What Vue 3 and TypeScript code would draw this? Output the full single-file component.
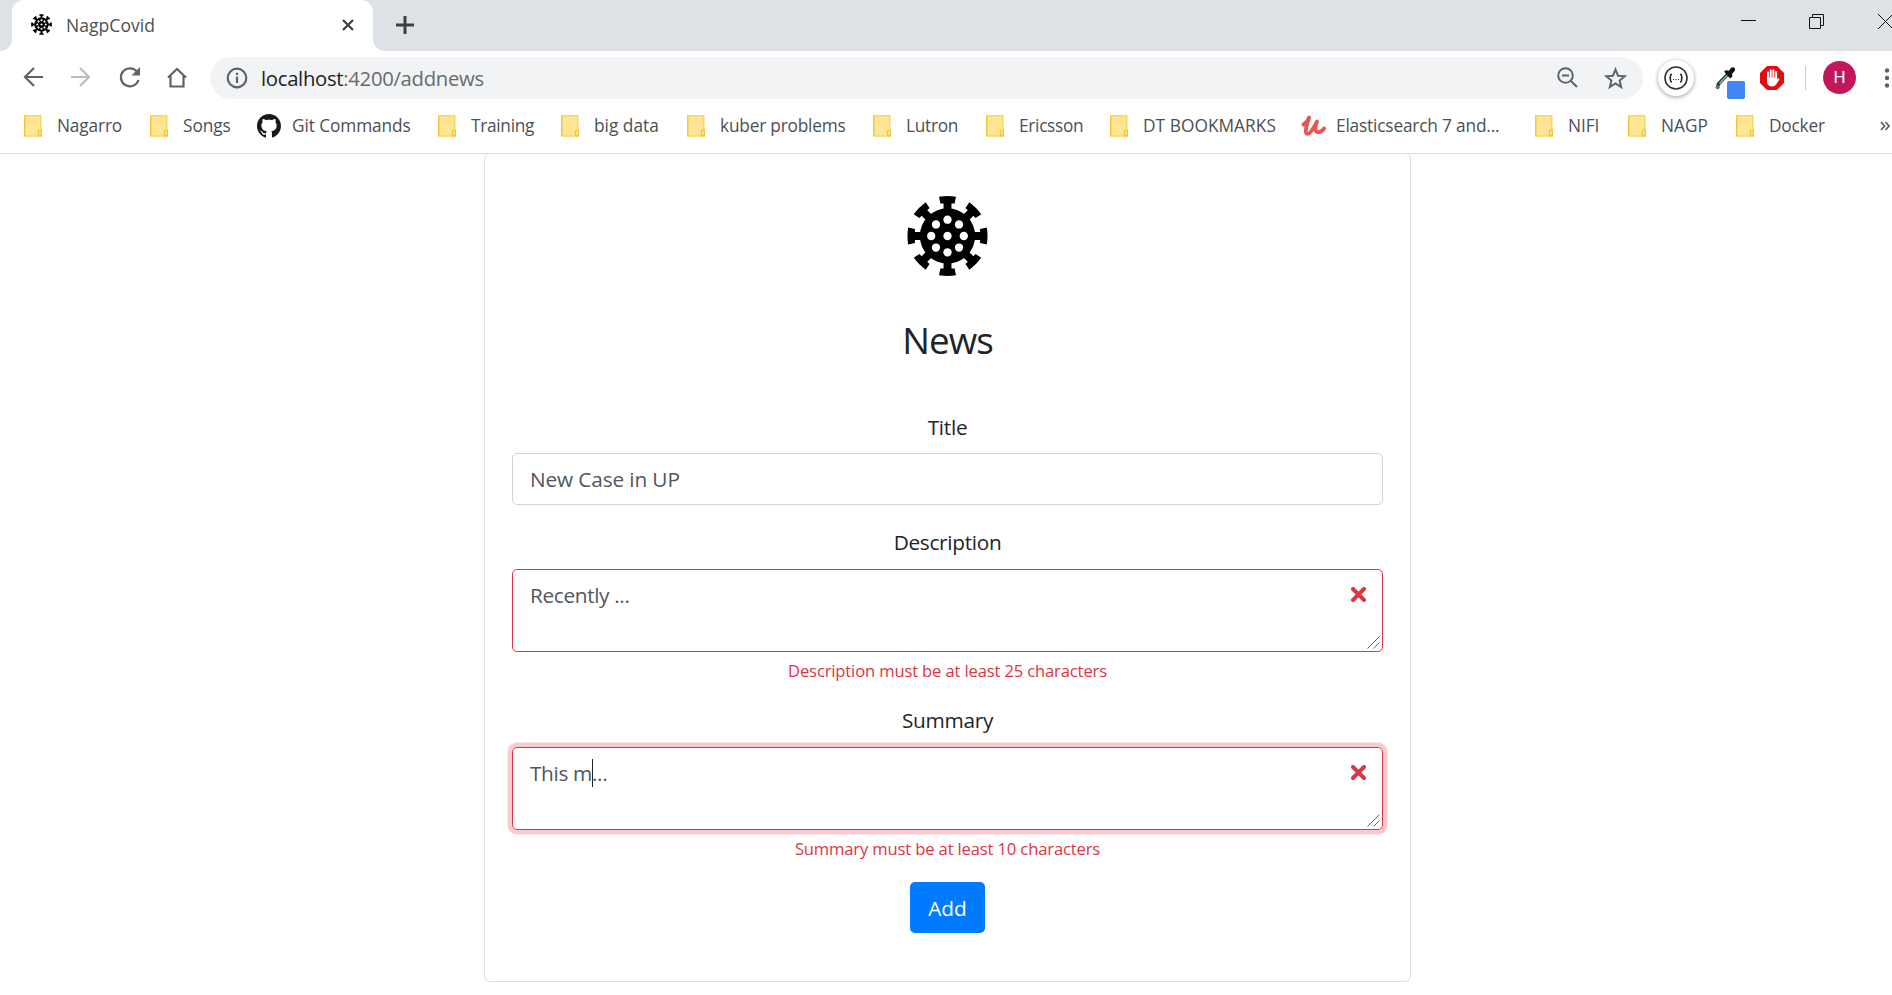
<script setup lang="ts">
interface Bookmark {
  label: string
  icon: 'folder' | 'github' | 'udemy'
  width: number
  tracking: number
}

const bookmarks: Bookmark[] = [
  { label: 'Nagarro', icon: 'folder', width: 126, tracking: -0.15 },
  { label: 'Songs', icon: 'folder', width: 107, tracking: -0.1 },
  { label: 'Git Commands', icon: 'github', width: 181, tracking: -0.1 },
  { label: 'Training', icon: 'folder', width: 123, tracking: -0.3 },
  { label: 'big data', icon: 'folder', width: 126, tracking: 0 },
  { label: 'kuber problems', icon: 'folder', width: 186, tracking: -0.2 },
  { label: 'Lutron', icon: 'folder', width: 113, tracking: -0.3 },
  { label: 'Ericsson', icon: 'folder', width: 124, tracking: -0.3 },
  { label: 'DT BOOKMARKS', icon: 'folder', width: 191, tracking: 0.05 },
  { label: 'Elasticsearch 7 and...', icon: 'udemy', width: 234, tracking: -0.18 },
  { label: 'NIFI', icon: 'folder', width: 93, tracking: -0.1 },
  { label: 'NAGP', icon: 'folder', width: 108, tracking: 0 },
  { label: 'Docker', icon: 'folder', width: 144, tracking: -0.2 },
]

const spikes = [0, 45, 90, 135, 180, 225, 270, 315]
</script>

<template>
  <div class="window">
    <svg class="defs" aria-hidden="true">
      <symbol id="virus" viewBox="-41 -41 82 82">
        <circle r="28" />
        <path
          v-for="a in spikes"
          :key="a"
          :transform="`rotate(${a})`"
          d="M-4-26V-33H-7.2L-8.6-39.8Q0-41.2 8.6-39.8L7.2-33H4V-26Z"
        />
        <circle r="4.2" fill="#fff" />
        <circle v-for="a in spikes" :key="'h' + a" :transform="`rotate(${a})`" cy="-16.5" r="4.2" fill="#fff" />
      </symbol>
    </svg>

    <header class="tabstrip">
      <div class="tab-edge"></div>
      <div class="tab">
        <svg class="favicon"><use href="#virus" /></svg>
        <span class="tab-title">NagpCovid</span>
        <svg class="tab-close" viewBox="0 0 12 12"><path d="M1 1 11 11M11 1 1 11" /></svg>
      </div>
      <div class="strip-rest">
        <svg class="plus" viewBox="0 0 18 18"><path d="M9 0V18M0 9H18" /></svg>
        <svg class="win-controls" viewBox="0 0 151 16">
          <path d="M0 6.5H15M68.5 3.5H79.5V14.5H68.5ZM71.5 3.5V.5H82.5V11.5H79.5M137 0 152 15M152 0 137 15" />
        </svg>
      </div>
    </header>

    <nav class="toolbar">
      <svg class="nav-icons" viewBox="0 0 170 24">
        <g fill="none" stroke="#5f6368" stroke-width="2.2">
          <path d="M20 11H2M11 2 2 11l9 9" />
          <path stroke="#babcbe" d="M48 11H66M57 2l9 9-9 9" />
          <path d="M114.500 6.500A9 9 0 1 0 115.500 14" />
          <path d="M145 11.500 154 3l9 8.500M147.500 9.500V20.500H160.500V9.500" />
        </g>
        <path fill="#5f6368" d="M117 1V9.500H108.500Z" />
      </svg>
      <div class="omnibox">
        <svg class="info" viewBox="0 0 22 22">
          <circle cx="11" cy="11" r="9.300" />
          <path d="M11 9.500V16M11 5.800V8" />
        </svg>
        <span class="url"><b>localhost</b>:4200/addnews</span>
        <svg class="omni-icons" viewBox="0 0 72 24">
          <g fill="none" stroke="#5f6368" stroke-width="2">
            <circle cx="9.500" cy="9.500" r="7.300" />
            <path d="M6 9.500H13M14.700 14.700 21 21" />
            <path d="M59.500 3.500 62 9.700 68.700 10.200 63.600 14.500 65.200 21 59.500 17.500 53.800 21 55.400 14.500 50.300 10.200 57 9.700Z" />
          </g>
        </svg>
      </div>
      <div class="ext-json">
        <svg viewBox="0 0 24 24">
          <circle cx="12" cy="12" r="11" fill="none" stroke="#333" stroke-width="1.600" />
          <path
            d="M8 8.200Q6.500 8.200 6.500 9.800V10.800Q6.500 12 5.200 12 6.500 12 6.500 13.200V14.500Q6.500 16 8 16M16 8.200Q17.500 8.200 17.500 9.800V10.800Q17.500 12 18.800 12 17.500 12 17.500 13.200V14.500Q17.500 16 16 16"
            fill="none" stroke="#222" stroke-width="1.500"
          />
          <path d="M9 13.500h1.100M11.500 13.500h1.100M14 13.500h1.100" stroke="#333" stroke-width="1.100" />
        </svg>
      </div>
      <svg class="ext-picker" viewBox="0 0 32 34">
        <path d="M12.500 8.500 3.500 18 2.500 21" fill="none" stroke="#333" stroke-width="3.400" />
        <path d="M12.500 9 4.500 17.500" fill="none" stroke="#7cc48d" stroke-width="1.500" />
        <path d="M9 5.500 11.500 4 13.500 5 16.500 1.500Q20.500 .5 20 4.500L17 8 17.500 10.500 15 12.500Z" fill="#111" />
        <circle cx="2.600" cy="21.300" r="2" fill="#4f8a62" />
        <rect x="12" y="15" width="18" height="18" rx="2" fill="#4285f4" />
      </svg>
      <svg class="ext-block" viewBox="0 0 24 24">
        <path d="M7 0H17L24 7V17L17 24H7L0 17V7Z" fill="#e40d0d" />
        <path d="M8 13V6.500M10.700 12V4.300M13.400 12V4.300M16.100 13V6" stroke="#fff" stroke-width="2" stroke-linecap="round" />
        <path d="M7 11.500H17.100V13.500L18.300 12.300Q20 12 19 14L16.500 18Q15 20.500 12 20.500 7 20 7 15.500Z" fill="#fff" />
      </svg>
      <div class="divider"></div>
      <div class="avatar">H</div>
      <svg class="menu" viewBox="0 0 6 20">
        <circle cx="3" cy="2.500" r="2.200" /><circle cx="3" cy="10" r="2.200" /><circle cx="3" cy="17.500" r="2.200" />
      </svg>
    </nav>

    <nav class="bookmarks">
      <div v-for="b in bookmarks" :key="b.label" class="bookmark" :style="{ width: b.width + 'px' }">
        <span class="bm-icon" :class="b.icon">
          <svg v-if="b.icon === 'folder'" width="18" height="22" viewBox="0 0 18 22">
            <path d="M.7.7H16.800V14.500H17.500V21H.7Z" fill="#ffe694" stroke="#fbd75a" stroke-width="1.400" />
            <path d="M.7.7V21" stroke="#efc843" stroke-width="1.300" />
            <path d="M14.500 20.800V16Q15.800 13.500 17.300 16V20.800Z" fill="#ffe694" stroke="#ecc53d" stroke-width="1.200" />
          </svg>
          <svg v-else-if="b.icon === 'github'" width="24" height="24" viewBox="0 0 16 16">
            <path
              fill="#1b1817"
              d="M8 0C3.580 0 0 3.580 0 8c0 3.540 2.290 6.530 5.470 7.590.4.070.55-.17.55-.38 0-.19-.01-.82-.01-1.490-2.010.37-2.530-.49-2.690-.94-.09-.23-.48-.94-.82-1.130-.28-.15-.68-.52-.01-.53.63-.01 1.080.58 1.230.82.72 1.210 1.870.87 2.330.66.070-.52.28-.87.51-1.070-1.780-.2-3.640-.89-3.640-3.950 0-.87.31-1.590.82-2.150-.08-.2-.36-1.020.08-2.120 0 0 .67-.21 2.200.82.64-.18 1.320-.27 2-.27s1.360.09 2 .27c1.530-1.040 2.200-.82 2.200-.82.44 1.100.16 1.920.08 2.120.51.56.82 1.270.82 2.150 0 3.070-1.870 3.750-3.650 3.950.29.25.54.73.54 1.480 0 1.070-.01 1.930-.01 2.200 0 .21.15.46.55.38A8.010 8.010 0 0 0 16 8c0-4.420-3.580-8-8-8Z"
            />
          </svg>
          <svg v-else width="25" height="24" viewBox="0 0 25 24">
            <path
              d="M2.500 10.500Q7 8 8 3.500C7 8 4.800 12.500 4.800 17 4.800 21 8 20.500 10 17.500 12.500 14 14.500 11 16 7.500 14 12 13.500 17.500 16.500 18 19.500 18.300 21.500 17 23 14.500"
              fill="none" stroke="#ec5252" stroke-width="3.800" stroke-linecap="round" stroke-linejoin="round"
            />
          </svg>
        </span>
        <span :style="{ letterSpacing: b.tracking + 'px' }">{{ b.label }}</span>
      </div>
      <svg class="more" viewBox="0 0 10 10"><path d="M1 1 4.500 5 1 9M5.500 1 9 5 5.500 9" /></svg>
    </nav>

    <main class="card">
      <svg class="logo"><use href="#virus" /></svg>
      <h3>News</h3>
      <label>Title</label>
      <div class="control single">New Case in UP</div>
      <label>Description</label>
      <div class="control area">
        <span>Recently ...</span>
        <svg class="invalid" viewBox="0 0 15 15"><path d="M2 2 13 13M13 2 2 13" /></svg>
        <svg class="grip" viewBox="0 0 13 13"><path d="M.5 12.500 12.500.5M6.500 12.500 12.500 6.500" /></svg>
      </div>
      <p class="error">Description must be at least 25 characters</p>
      <label>Summary</label>
      <div class="control area focused">
        <span>This m<i class="caret"></i>...</span>
        <svg class="invalid" viewBox="0 0 15 15"><path d="M2 2 13 13M13 2 2 13" /></svg>
        <svg class="grip" viewBox="0 0 13 13"><path d="M.5 12.500 12.500.5M6.500 12.500 12.500 6.500" /></svg>
      </div>
      <p class="error">Summary must be at least 10 characters</p>
      <button class="add" type="button">Add</button>
    </main>
  </div>
</template>

<style>
body {
  margin: 0;
  overflow: hidden;
}
</style>

<style scoped>
* {
  box-sizing: border-box;
}
.window {
  width: 1892px;
  height: 995px;
  overflow: hidden;
  background: #fff;
  font-family: 'Open Sans', 'Noto Sans', sans-serif;
  color: #212529;
}
svg {
  display: block;
  flex: none;
}
.defs {
  width: 0;
  height: 0;
  position: absolute;
}
.tabstrip {
  display: flex;
  height: 51px;
  background: #fff;
}
.tab-edge {
  width: 12px;
  background: #dee1e6;
  border-bottom-right-radius: 12px;
}
.tab {
  display: flex;
  align-items: center;
  width: 361px;
  padding: 0 19px;
  background: linear-gradient(#dee1e6, #dee1e6) top / 100% 14px no-repeat;
  position: relative;
  z-index: 0;
}
.tab::before {
  content: '';
  position: absolute;
  inset: 0;
  z-index: -1;
  background: #fff;
  border-radius: 12px 12px 0 0;
}
.favicon {
  width: 21px;
  height: 21px;
  margin-top: -2px;
}
.tab-title {
  margin: -2px 0 0 14px;
  font-size: 17.5px;
  line-height: 24px;
  letter-spacing: 0.05px;
  color: #4c5054;
}
.tab-close {
  width: 12px;
  height: 12px;
  margin: -1px 0 0 auto;
  fill: none;
  stroke: #3c4043;
  stroke-width: 2.2;
}
.strip-rest {
  display: flex;
  flex: 1;
  background: #dee1e6;
  border-bottom-left-radius: 12px;
}
.plus {
  width: 18px;
  height: 18px;
  margin: 16px 0 0 23px;
  stroke: #3c4043;
  stroke-width: 3;
}
.win-controls {
  width: 151px;
  height: 16px;
  margin: 14px 0 0 auto;
  fill: none;
  stroke: #111;
  stroke-width: 1;
}
.toolbar {
  display: flex;
  align-items: center;
  height: 54px;
}
.nav-icons {
  width: 170px;
  height: 24px;
  margin: 0 0.5px 0 22.5px;
}
.omnibox {
  display: flex;
  align-items: center;
  width: 1433px;
  height: 42px;
  margin-left: 17px;
  padding: 0 15px 0 16px;
  border-radius: 21px;
  background: #f1f3f4;
}
.info {
  width: 22px;
  height: 22px;
  fill: none;
  stroke: #5f6368;
  stroke-width: 2.2;
}
.url {
  margin-left: 13px;
  font-size: 20.3px;
  line-height: 28px;
  letter-spacing: -0.3px;
  color: #676b6f;
}
.url b {
  font-weight: 400;
  color: #202124;
}
.omni-icons {
  width: 72px;
  height: 24px;
  margin-left: auto;
}
.ext-json {
  width: 36px;
  height: 36px;
  margin-left: 15px;
  padding: 6px;
  border-radius: 50%;
  background: #fff;
  box-shadow: 0 1px 4px rgba(0, 0, 0, 0.4);
}
.ext-picker {
  width: 32px;
  height: 34px;
  margin: 10px 0 0 21px;
}
.ext-block {
  width: 24px;
  height: 24px;
  margin-left: 13px;
}
.divider {
  width: 1px;
  height: 24px;
  margin-left: 21px;
  background: #c6c8cb;
}
.avatar {
  width: 33px;
  height: 33px;
  margin: -1px 0 0 17px;
  border-radius: 50%;
  background: #c2185b;
  color: #fff;
  font: 17px/33px Roboto, sans-serif;
  text-align: center;
}
.menu {
  width: 6px;
  height: 20px;
  margin-left: 28px;
  fill: #5f6368;
}
.bookmarks {
  display: flex;
  align-items: center;
  height: 49px;
  padding: 0 0 6px 24px;
  border-bottom: 1px solid #dadce0;
  font-size: 17.3px;
  line-height: 24px;
  color: #4c5054;
  white-space: nowrap;
}
.bookmark {
  display: flex;
  align-items: center;
  flex: none;
}
.bm-icon {
  width: 33px;
  flex: none;
}
.bm-icon.github,
.bm-icon.udemy {
  width: 35px;
}
.more {
  width: 10px;
  height: 10px;
  fill: none;
  stroke: #5f6368;
  stroke-width: 1.8;
}
.card {
  display: flex;
  flex-direction: column;
  align-items: center;
  width: 927px;
  height: 829px;
  margin: -1px 0 0 484px;
  padding: 41px 27px 0;
  border: 1px solid #dfdfdf;
  border-radius: 6px;
}
.logo {
  width: 81px;
  height: 82px;
}
h3 {
  margin: 41px 0 48px;
  font-size: 36.8px;
  line-height: 45px;
  font-weight: 400;
  letter-spacing: -1px;
}
label {
  font-size: 20.8px;
  line-height: 32px;
  letter-spacing: -0.3px;
}
.control {
  position: relative;
  width: 871px;
  padding: 9px 17px;
  border: 1px solid #ced4da;
  border-radius: 5px;
  font-size: 20.8px;
  line-height: 32px;
  letter-spacing: -0.35px;
  color: #50575e;
}
.single {
  height: 52px;
  margin: 10px 0 21px;
  letter-spacing: -0.13px;
}
.area {
  height: 83px;
  margin-top: 11px;
  border-color: #dc3545;
}
.focused {
  box-shadow: 0 0 0 4.5px #f7cbd0;
}
.invalid {
  position: absolute;
  right: 16px;
  top: 17px;
  width: 15px;
  height: 15px;
  stroke: #dc3545;
  stroke-width: 4;
  stroke-linecap: round;
}
.grip {
  position: absolute;
  right: 2px;
  bottom: 2px;
  width: 13px;
  height: 13px;
  stroke: #666;
  stroke-width: 1;
}
.caret {
  display: inline-block;
  width: 1px;
  height: 28px;
  margin-right: -1px;
  vertical-align: -6px;
  background: #222;
}
.error {
  margin: 6px 0 20px;
  font-size: 16.6px;
  line-height: 26px;
  letter-spacing: -0.15px;
  color: #dc3545;
}
.add {
  width: 75px;
  height: 51px;
  padding: 0;
  border: 0;
  border-radius: 5px;
  background: #007bff;
  color: #fff;
  font: 20.8px/32px 'Open Sans', 'Noto Sans', sans-serif;
}
</style>
